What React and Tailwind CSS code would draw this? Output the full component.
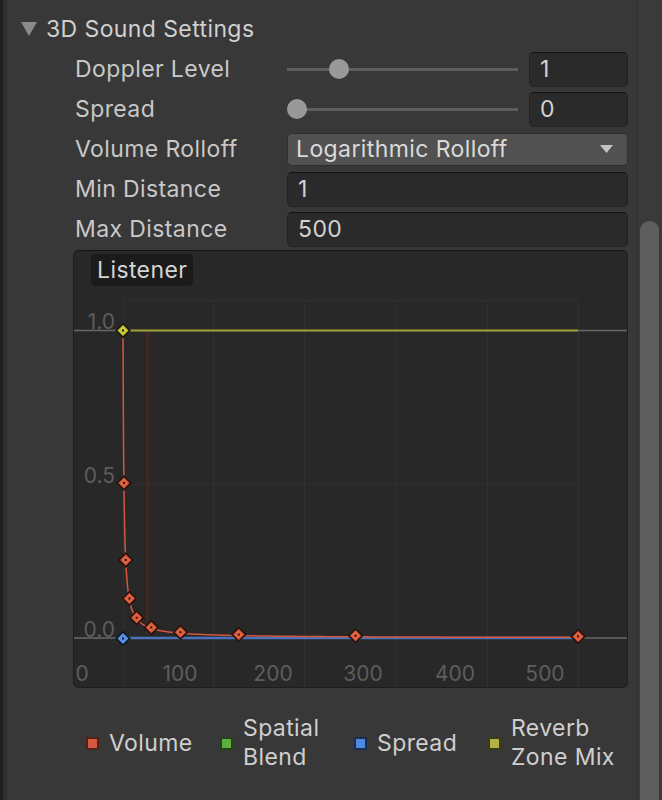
import React from 'react';

const font = "font-['Inter','Noto_Sans',sans-serif]";

// curve mapping measured from the reference
const px = (d) => 122.1 + d * 0.912;
const py = (v) => 638 - v * 308;

const curvePath = (() => {
  const pts = [];
  for (let i = 0; i <= 240; i++) {
    const d = Math.pow(500, i / 240);
    pts.push(`${px(d).toFixed(2)},${py(1 / d).toFixed(2)}`);
  }
  return 'M' + pts.join(' L');
})();

const volumeKeys = [1, 2, 4, 8, 16, 32, 64, 128, 256, 500];

function Diamond({ x, y, fill, edge }) {
  return (
    <g>
      <polygon points={`${x},${y - 8} ${x + 8},${y} ${x},${y + 8} ${x - 8},${y}`} fill={edge} />
      <polygon points={`${x},${y - 5.5} ${x + 5.5},${y} ${x},${y + 5.5} ${x - 5.5},${y}`} fill={fill} />
      <rect x={x - 1} y={y - 1} width="2" height="2" fill={edge} />
    </g>
  );
}

function Slider({ thumb, value }) {
  return (
    <div className="flex h-full flex-1 items-center">
      <div className="relative h-[20px] flex-1">
        <div className="absolute left-0 right-0 top-[9px] h-[3px] bg-[#5e5e5e]" />
        <div className={`absolute top-0 h-[20px] w-[20px] rounded-full bg-[#999999] ${thumb}`} />
      </div>
      <div className="ml-[11px] w-[99px]">
        <NumberField value={value} />
      </div>
    </div>
  );
}

function NumberField({ value }) {
  return (
    <div className="flex h-[35px] items-center rounded-[5px] border border-[#232323] border-t-[#131313] bg-[#2a2a2a] px-[10px] text-[23px] tracking-[0.4px] text-[#d2d2d2]">
      {value}
    </div>
  );
}

function Row({ label, children }) {
  return (
    <div className="flex h-10 items-center">
      <div className="w-[214px] pl-[2px] text-[23px] tracking-[0.4px] text-[#c8c8c8]">{label}</div>
      <div className="flex h-full flex-1 items-center">{children}</div>
    </div>
  );
}

function LegendItem({ color, edge, children }) {
  return (
    <div className="flex w-[134px] items-center">
      <div className={`ml-[6px] h-[13px] w-[13px] border-2 ${color} ${edge}`} />
      <div className="ml-[10px] whitespace-nowrap text-[23px] leading-[29px] tracking-[0.4px] text-[#cfcfcf]">{children}</div>
    </div>
  );
}

export default function App() {
  return (
    <div className={`flex h-[800px] w-full overflow-hidden bg-[#383838] ${font}`}>
      <div className="w-[3px] bg-[#202020]" />
      <div className="w-[4px] bg-[#2e2e2e]" />

      <div className="flex-1 pt-[9px]">
        {/* header */}
        <div className="flex h-10 items-center pl-[14px]">
          <svg width="16" height="14" viewBox="0 0 16 14">
            <polygon points="0,0 16,0 8,14" fill="#8a8a8a" />
          </svg>
          <span className="ml-[9px] text-[23px] tracking-[0.4px] text-[#d0d0d0]">3D Sound Settings</span>
        </div>

        <div className="ml-[66px] mr-[9px]">
          <Row label="Doppler Level">
            <Slider thumb="left-[42px]" value="1" />
          </Row>
          <Row label="Spread">
            <Slider thumb="left-0" value="0" />
          </Row>
          <Row label="Volume Rolloff">
            <div className="flex h-[33px] flex-1 items-center justify-between rounded-[5px] border border-[#2f2f2f] bg-[#515151] pl-[8px] pr-[14px] text-[23px] tracking-[0.4px] text-[#dadada]">
              <span>Logarithmic Rolloff</span>
              <svg width="13" height="8" viewBox="0 0 13 8">
                <polygon points="0,0 13,0 6.5,8" fill="#c4c4c4" />
              </svg>
            </div>
          </Row>
          <Row label="Min Distance">
            <div className="flex-1">
              <NumberField value="1" />
            </div>
          </Row>
          <Row label="Max Distance">
            <div className="flex-1">
              <NumberField value="500" />
            </div>
          </Row>

          {/* rolloff graph */}
          <div className="relative mt-[1px] h-[438px] overflow-hidden rounded-[6px] border border-[#1d1d1d] border-t-[#151515] bg-[#282828]">
            <svg className="absolute inset-0 h-full w-full" viewBox="74 251 553 436">
              {/* fine grid */}
              {[168, 259, 350, 442, 533].map((x) => (
                <line key={x} x1={x} y1="300" x2={x} y2="688" stroke="#2b2b2b" strokeWidth="1" />
              ))}
              {[123, 213, 304, 396, 487, 578].map((x) => (
                <line key={x} x1={x + 0.5} y1="300" x2={x + 0.5} y2="688" stroke="#303030" strokeWidth="1" />
              ))}
              <line x1="123" y1="300.5" x2="578" y2="300.5" stroke="#303030" strokeWidth="1" />
              <line x1="123" y1="484.5" x2="578" y2="484.5" stroke="#303030" strokeWidth="1" />

              {/* axis labels */}
              <g fontFamily="Inter, sans-serif" fontSize="21" fill="#5d5d5d">
                <text x="115" y="329" textAnchor="end">1.0</text>
                <text x="115" y="483" textAnchor="end">0.5</text>
                <text x="115" y="637" textAnchor="end">0.0</text>
                <text x="82" y="681" textAnchor="middle">0</text>
                <text x="180" y="681" textAnchor="middle">100</text>
                <text x="273" y="681" textAnchor="middle">200</text>
                <text x="363" y="681" textAnchor="middle">300</text>
                <text x="455" y="681" textAnchor="middle">400</text>
                <text x="545" y="681" textAnchor="middle">500</text>
              </g>

              {/* listener marker */}
              <rect x="146" y="331" width="3" height="303" fill="#3f2723" />

              {/* outside range lines */}
              <line x1="74" y1="330.5" x2="123" y2="330.5" stroke="#686868" strokeWidth="1.5" />
              <line x1="578" y1="330.5" x2="628" y2="330.5" stroke="#686868" strokeWidth="1.5" />
              <line x1="74" y1="638" x2="123" y2="638" stroke="#686868" strokeWidth="1.5" />
              <line x1="578" y1="638" x2="628" y2="638" stroke="#686868" strokeWidth="1.5" />

              {/* reverb zone mix */}
              <line x1="123" y1="330.5" x2="578" y2="330.5" stroke="#a3a334" strokeWidth="2" />
              {/* spread */}
              <line x1="123" y1="638" x2="578" y2="638" stroke="#4a72bd" strokeWidth="2.5" />
              {/* volume */}
              <path d={curvePath} fill="none" stroke="#d2573d" strokeWidth="1.5" />

              {volumeKeys.slice(1).map((d) => (
                <Diamond key={d} x={px(d)} y={py(1 / d) - 1} fill="#e0603f" edge="#2a1410" />
              ))}
              <Diamond x={123} y={638.5} fill="#5a8fe2" edge="#0f1828" />
              <Diamond x={123} y={330.5} fill="#c9c83c" edge="#1c1c0e" />
            </svg>

            <div className="absolute left-[17px] top-[3px] rounded-[5px] bg-[#1b1b1b] px-[6px] py-[1px] text-[23px] leading-[30px] tracking-[0.4px] text-[#d4d4d4]">
              Listener
            </div>
          </div>
        </div>

        {/* legend */}
        <div className="ml-[73px] mt-[26px] flex">
          <LegendItem color="bg-[#d6583e]" edge="border-[#4a241b]">Volume</LegendItem>
          <LegendItem color="bg-[#5cae3e]" edge="border-[#263f1f]">
            Spatial<br />Blend
          </LegendItem>
          <LegendItem color="bg-[#4e88e2]" edge="border-[#1d2e4c]">Spread</LegendItem>
          <LegendItem color="bg-[#b3b243]" edge="border-[#3a3a1c]">
            Reverb<br />Zone Mix
          </LegendItem>
        </div>
      </div>

      {/* scrollbar */}
      <div className="w-[25px] border-l border-[#2f2f2f] bg-[#3a3a3a] pl-[2px] pr-[3px] pt-[221px]">
        <div className="h-[640px] rounded-t-full bg-[#5e5e5e]" />
      </div>
    </div>
  );
}
